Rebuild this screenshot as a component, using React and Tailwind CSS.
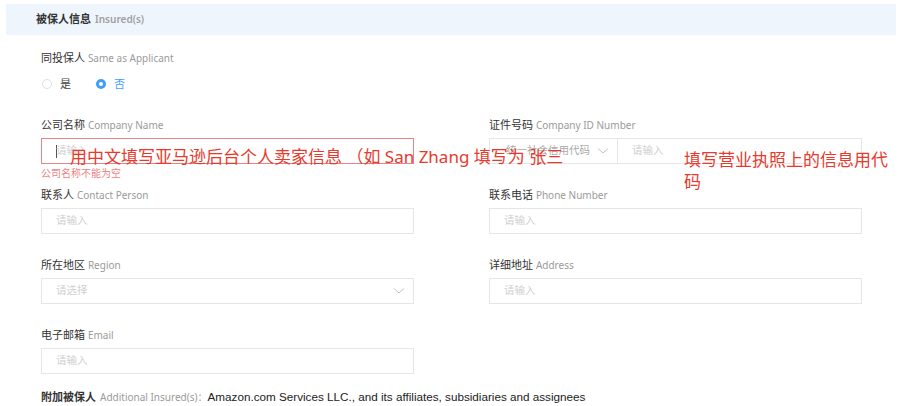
import React from "react";

const FONT = { fontFamily: '"Noto Sans", "Noto Sans CJK SC", sans-serif' };

function Label({ zh, en }) {
  return (
    <div className="h-[16px] leading-[16px] text-[11px] text-[#333] whitespace-nowrap">
      {zh} <span className="text-[10px] text-[#9a9a9a]">{en}</span>
    </div>
  );
}

function Chevron({ className = "" }) {
  return (
    <svg width="12" height="8" viewBox="0 0 12 8" className={className}>
      <path d="M1 1.5 L6 6 L11 1.5" fill="none" stroke="#c0c4cc" strokeWidth="1" />
    </svg>
  );
}

function Input({ placeholder = "请输入", error = false, select = false }) {
  return (
    <div
      className={`mt-[5px] h-[26px] w-[373px] border flex items-center pl-[14px] pr-[8px] bg-white ${
        error ? "border-[#e58585]" : "border-[#e6e6e6]"
      }`}
    >
      {error && <span className="w-px h-[13px] bg-[#555] mr-[-1px]" />}
      <span className="text-[10.5px] text-[#cfcfcf] flex-1">{placeholder}</span>
      {select && <Chevron />}
    </div>
  );
}

function Field({ zh, en, children }) {
  return (
    <div className="flex flex-col relative">
      <Label zh={zh} en={en} />
      {children}
    </div>
  );
}

export default function App() {
  return (
    <div className="w-[900px] h-[406px] bg-white overflow-hidden relative" style={FONT}>
      <div className="mt-[4px] ml-[6px] mr-[4px] h-[31px] bg-[#eef5fd] flex items-center pl-[30px]">
        <span className="text-[11px] font-bold text-[#333]">被保人信息</span>
        <span className="ml-[4px] text-[10px] font-semibold text-[#a0a0a0]">Insured(s)</span>
      </div>

      <div className="pl-[41px]">
        <div className="mt-[15px]">
          <Label zh="同投保人" en="Same as Applicant" />
        </div>
        <div className="mt-[10px] h-[16px] flex items-center text-[11px]">
          <span className="w-[10px] h-[10px] rounded-full border border-[#dcdfe6] ml-[1px]" />
          <span className="ml-[8px] text-[#444]">是</span>
          <span className="ml-[25px] w-[10px] h-[10px] rounded-full bg-[#409eff] flex items-center justify-center">
            <span className="w-[4px] h-[4px] rounded-full bg-white" />
          </span>
          <span className="ml-[8px] text-[#409eff]">否</span>
        </div>

        <div className="mt-[25px] grid grid-cols-[373px_373px] gap-x-[75px] gap-y-[23px]">
          <Field zh="公司名称" en="Company Name">
            <Input error />
            <div className="absolute left-0 top-[50px] text-[10px] leading-[12px] text-[#ee7f7f]">公司名称不能为空</div>
          </Field>
          <Field zh="证件号码" en="Company ID Number">
            <div className="mt-[5px] h-[26px] w-[373px] border border-[#e6e6e6] flex items-center">
              <div className="w-[128px] h-full flex items-center pl-[16px] pr-[8px] border-r border-[#e6e6e6]">
                <span className="text-[10.5px] text-[#aaa] flex-1 whitespace-nowrap">统一社会信用代码</span>
                <Chevron />
              </div>
              <span className="ml-[14px] text-[10.5px] text-[#cfcfcf]">请输入</span>
            </div>
          </Field>
          <Field zh="联系人" en="Contact Person">
            <Input />
          </Field>
          <Field zh="联系电话" en="Phone Number">
            <Input />
          </Field>
          <Field zh="所在地区" en="Region">
            <Input placeholder="请选择" select />
          </Field>
          <Field zh="详细地址" en="Address">
            <Input />
          </Field>
          <Field zh="电子邮箱" en="Email">
            <Input />
          </Field>
        </div>

        <div className="mt-[15px] h-[16px] flex items-center whitespace-nowrap">
          <span className="text-[11px] font-bold text-[#333]">附加被保人</span>
          <span className="ml-[4px] text-[10px] text-[#9a9a9a]">Additional Insured(s)：</span>
          <span className="text-[11.7px] text-[#222]" style={{ fontFamily: '"Liberation Sans", sans-serif' }}>
            Amazon.com Services LLC., and its affiliates, subsidiaries and assignees
          </span>
        </div>
      </div>

      <div className="absolute left-[70px] top-[146px] text-[17px] leading-[22px] text-[#e8392d] whitespace-nowrap">
        用中文填写亚马逊后台个人卖家信息 （如 San Zhang 填写为 张三
      </div>
      <div className="absolute left-[684px] top-[149px] text-[17px] leading-[22px] text-[#e8392d] whitespace-nowrap">
        填写营业执照上的信息用代
        <br />码
      </div>
    </div>
  );
}
